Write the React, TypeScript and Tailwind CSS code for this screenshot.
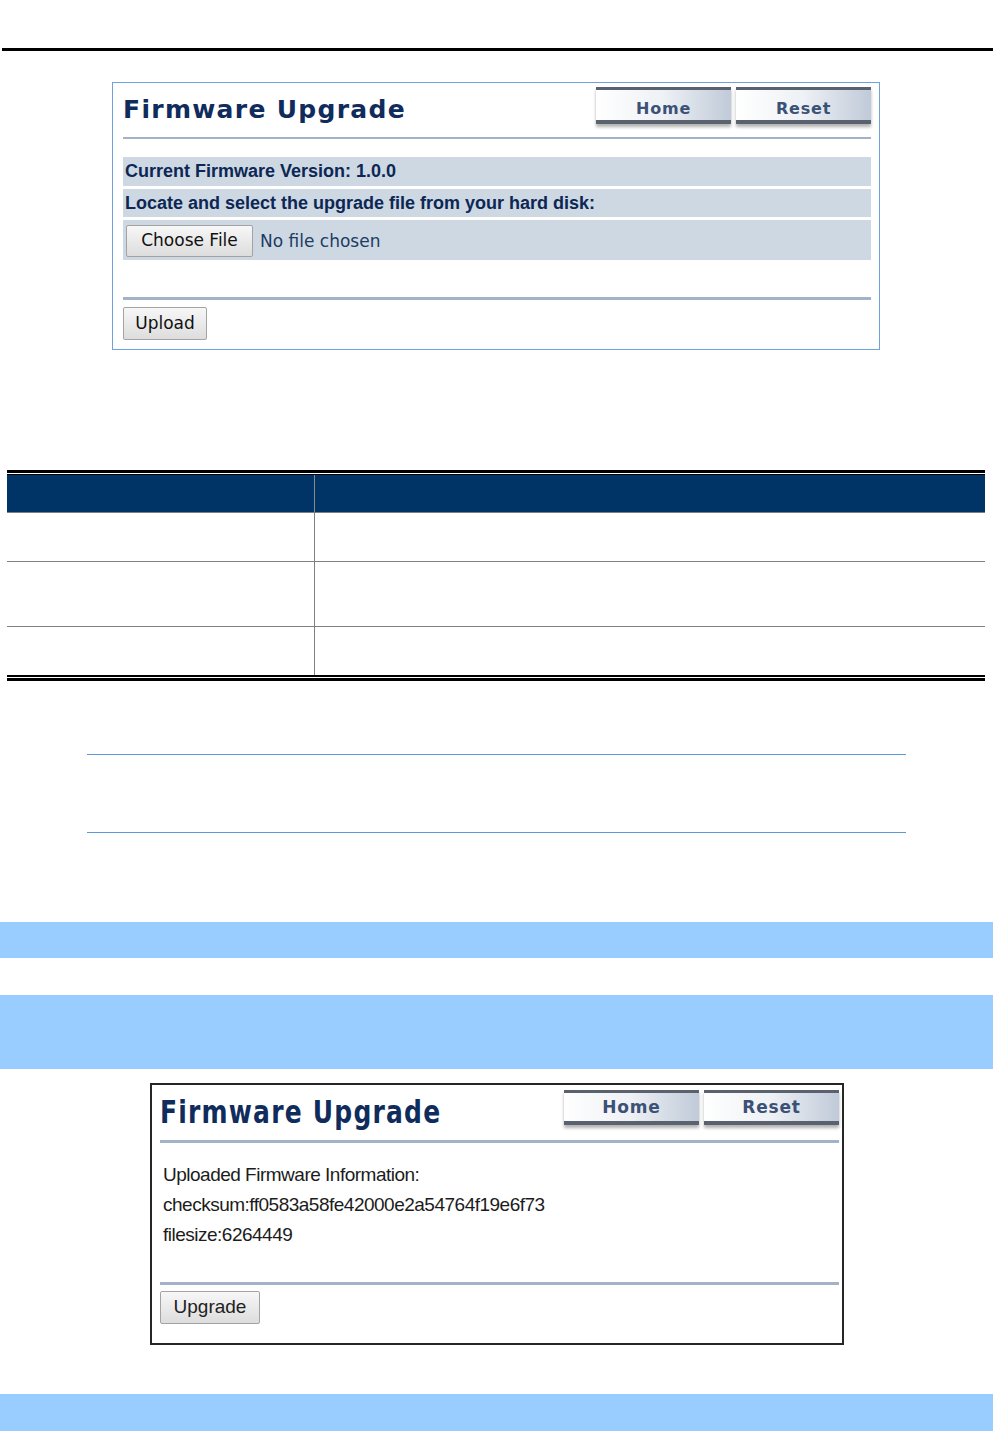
const verdana = { fontFamily: '"DejaVu Sans", Verdana, sans-serif' };

function NavButton({ label, big }: { label: string; big?: boolean }) {
  return (
    <div
      className={`flex w-[135px] items-center justify-center border-t-[3px] border-b-[4px] border-[#59626e] bg-linear-to-r from-white via-[#eef1f5] to-[#c0cad8] font-bold tracking-[0.8px] text-[#3b5175] shadow-[0_3px_3px_rgba(0,0,0,0.3)] ${
        big ? 'h-[37px] pt-[8px] text-[16px]' : 'h-[35px] pt-[2px] text-[17px]'
      }`}
      style={verdana}
    >
      {label}
    </div>
  );
}

function GrayButton({ label, className }: { label: string; className: string }) {
  return (
    <div
      className={`flex items-center justify-center rounded-[2px] border border-[#a3a3a3] bg-linear-to-b from-[#f7f7f7] to-[#dddddd] text-[#111] ${className}`}
    >
      {label}
    </div>
  );
}

function FirstShot() {
  return (
    <div className="mt-[31px] ml-[112px] h-[268px] w-[768px] border border-[#6fa2da] bg-white pl-[10px] pr-[8px]">
      <div className="flex h-[54px] items-start justify-between">
        <div
          className="mt-[14px] text-[25px] leading-[25px] font-bold tracking-[1.3px] text-[#0f2c5c]"
          style={verdana}
        >
          Firmware Upgrade
        </div>
        <div className="mt-[4px] flex gap-[5px]">
          <NavButton label="Home" big />
          <NavButton label="Reset" big />
        </div>
      </div>
      <div className="h-[2px] bg-[#a3b2c7]" />
      <div className="text-[18px] font-bold text-[#0c2754]" style={{ fontFamily: '"Liberation Sans", Arial, sans-serif' }}>
        <div className="mt-[18px] flex h-[29px] items-center bg-[#cdd8e3] pl-[2px]">Current Firmware Version: 1.0.0</div>
        <div className="mt-[3px] flex h-[28px] items-center bg-[#cdd8e3] pl-[2px]">
          Locate and select the upgrade file from your hard disk:
        </div>
      </div>
      <div className="mt-[3px] flex h-[40px] items-start bg-[#cdd8e3] text-[17px]" style={verdana}>
        <GrayButton label="Choose File" className="mt-[5px] ml-[3px] h-[32px] w-[127px]" />
        <span className="mt-[9px] ml-[7px] text-[#1d3c63]">No file chosen</span>
      </div>
      <div className="mt-[37px] h-[3px] bg-[#a3b2c7]" />
      <div style={verdana} className="text-[17px]">
        <GrayButton label="Upload" className="mt-[7px] h-[33px] w-[84px]" />
      </div>
    </div>
  );
}

function SecondShot() {
  const arial = { fontFamily: '"Liberation Sans", Arial, sans-serif' };
  return (
    <div className="mt-[14px] ml-[150px] h-[262px] w-[694px] border-2 border-[#262626] bg-white pl-[8px] pr-[3px]">
      <div className="flex h-[55px] items-start justify-between">
        <div
          className="mt-[15px] origin-center scale-y-[1.28] text-[25px] leading-[25px] font-bold tracking-[1.2px] text-[#0f2c5c]"
          style={verdana}
        >
          Firmware Upgrade
        </div>
        <div className="mt-[5px] flex gap-[5px]">
          <NavButton label="Home" />
          <NavButton label="Reset" />
        </div>
      </div>
      <div className="h-[3px] bg-[#a3b2c7]" />
      <div className="mt-[17px] pl-[3px] text-[19px] leading-[30px] tracking-[-0.5px] text-[#1c1c1c]" style={arial}>
        <div>Uploaded Firmware Information:</div>
        <div>checksum:ff0583a58fe42000e2a54764f19e6f73</div>
        <div>filesize:6264449</div>
      </div>
      <div className="mt-[32px] h-[3px] bg-[#a3b2c7]" />
      <div style={arial} className="text-[19px]">
        <GrayButton label="Upgrade" className="mt-[6px] h-[33px] w-[100px] border-[#8a8a8a] text-[#222]" />
      </div>
    </div>
  );
}

function ParamTable() {
  const rows = [49, 65, 48];
  return (
    <div className="mt-[120px] ml-[7px] w-[978px]">
      <div className="h-[3px] bg-black" />
      <div className="mt-[1px] h-[1px] bg-black" />
      <div className="grid h-[38px] grid-cols-[308px_1fr] border-b border-[#7f7f7f] bg-[#003366]">
        <div className="border-r border-[#8a8a8a]" />
        <div />
      </div>
      {rows.map((h, i) => (
        <div
          key={i}
          className={`grid grid-cols-[308px_1fr] ${i < rows.length - 1 ? 'border-b border-[#808080]' : ''}`}
          style={{ height: h }}
        >
          <div className="border-r border-[#808080]" />
          <div />
        </div>
      ))}
      <div className="h-[2px] bg-black" />
      <div className="mt-[1px] h-[3px] bg-black" />
    </div>
  );
}

export default function App() {
  return (
    <div className="h-[1431px] w-[993px] overflow-hidden bg-white">
      <div className="mt-[48px] ml-[2px] h-[3px] bg-black" />
      <FirstShot />
      <ParamTable />
      <div className="mt-[73px] ml-[87px] w-[819px]">
        <div className="h-[1px] bg-[#5b9bd5]" />
        <div className="h-[77px]" />
        <div className="h-[1px] bg-[#5b9bd5]" />
      </div>
      <div className="mt-[89px] h-[36px] bg-[#99ccff]" />
      <div className="mt-[37px] h-[74px] bg-[#99ccff]" />
      <SecondShot />
      <div className="mt-[49px] h-[37px] bg-[#99ccff]" />
    </div>
  );
}
